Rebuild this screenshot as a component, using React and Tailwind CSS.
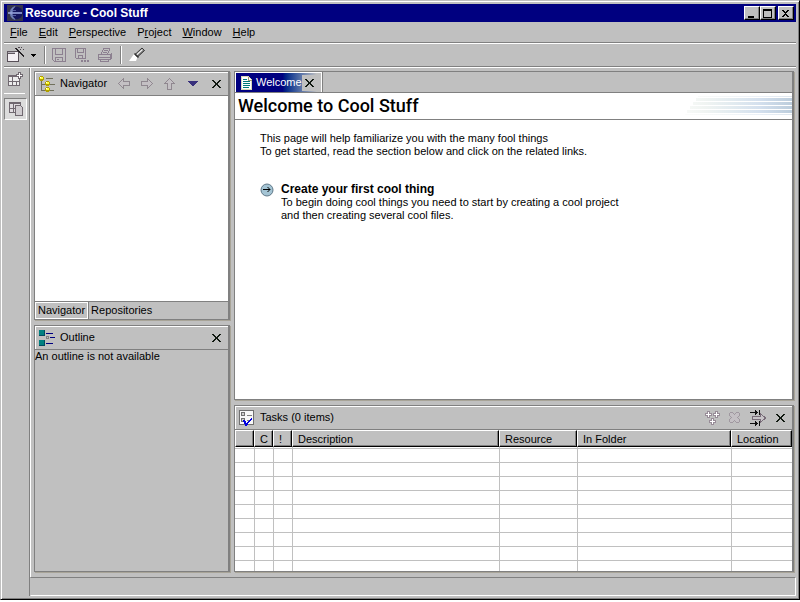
import React from 'react';

const Line = ({ d, c = '#808080', w = 1 }) => <path d={d} stroke={c} strokeWidth={w} fill="none" />;

function Svg({ w = 16, h = 16, children, className = '' }) {
  return (
    <svg width={w} height={h} viewBox={`0 0 ${w} ${h}`} shapeRendering="crispEdges" aria-hidden="true" className={`shrink-0 ${className}`}>
      {children}
    </svg>
  );
}

const EclipseIcon = () => (
  <svg width="16" height="16" viewBox="0 0 16 16" aria-hidden="true" className="shrink-0">
    <rect width="16" height="16" fill="#34344c" />
    <circle cx="9.5" cy="8" r="6.2" fill="#14145c" />
    <path d="M8 1.5A6.800 6.800 0 0 0 8 14.500A8.500 8.500 0 0 1 8 1.500" fill="#8090c4" stroke="#6878b0" strokeWidth="0.8" />
    <path d="M1 8h14" stroke="#98a4dc" strokeWidth="1.6" />
    <path d="M4 5.500h5M4 10.500h5" stroke="#6470b0" strokeWidth="0.8" />
  </svg>
);

const CloseIcon = () => (
  <Svg w={9} h={8}>
    <path d="M0 0h2v1h1v1h1v1h1v-1h1v-1h1v-1h2v1h-1v1h-1v1h-1v2h1v1h1v1h1v1h-2v-1h-1v-1h-1v-1h-1v1h-1v1h-1v1h-2v-1h1v-1h1v-1h1v-2h-1v-1h-1v-1h-1z" fill="#101810" />
  </Svg>
);

const WizardIcon = () => (
  <Svg w={17}>
    <path d="M0.500 4.500h11v10h-11z" fill="#f4f0f4" stroke="#585058" />
    <path d="M0 4h8v3h-8z" fill="#605860" />
    <path d="M1 5h7v1h-7z" fill="#b8b4bc" />
    <Line d="M11 0.500h2M14 0.500h1M17 0.500h1M16 2.500h1M13 2.500h1" c="#504850" />
    <path d="M8 1h2v1h1v1h1v1h1v1h1v1h1v1h1v1h1v2h-1v-1h-1v-1h-1v-1h-1v-1h-1v-1h-1v-1h-1v-1h-1v-1h-1v-1h-1z" fill="#282428" />
  </Svg>
);

const SaveIcon = () => (
  <Svg>
    <path d="M1.5 1.5h13v13h-11l-2-2zM4.5 1.5v6h7v-6M4.5 14.5v-4h7v4M6 12.5h2" stroke="#8c8090" fill="none" />
  </Svg>
);

const SaveAsIcon = () => (
  <Svg>
    <path d="M1.5 1.5h10v10h-9l-1-1zM3.5 1.5v4h6v-4M4.5 11.5v-3h4v3" stroke="#8c8090" fill="none" />
    <path d="M7 13h2v2h-2zM10 13h2v2h-2zM13 13h2v2h-2z" fill="#8c8090" />
  </Svg>
);

const PrintIcon = () => (
  <Svg>
    <path d="M4.5 7.500v-1l2-5h6v1l-2 5M1.5 7.5h12v5h-12zM3.5 12.5v2h8v-2M1.5 10.5h12M13.5 7.5l1-1v5l-1 1M7 3.5h4M6 5.5h4" stroke="#8c8090" fill="none" />
  </Svg>
);

const FlashlightIcon = () => (
  <svg width="16" height="16" viewBox="0 0 16 16" aria-hidden="true" className="shrink-0">
    <path d="M0 14L5 7L8.500 10L7 14z" fill="#fff" />
    <path d="M6 7.500L13 1L15.500 3.500L8.500 10z" fill="#787878" stroke="#202020" strokeWidth="0.8" />
    <path d="M7.500 8L13.500 2.500" stroke="#f0f0f0" strokeWidth="1.2" />
    <path d="M5.500 6.500L9.500 10.500" stroke="#303030" strokeWidth="1.4" />
  </svg>
);

const PerspectiveAddIcon = () => (
  <Svg>
    <path d="M0.500 3.500h11v10h-11z" fill="#ececec" stroke="#706870" />
    <path d="M0 3h9v2h-9z" fill="#706870" />
    <Line d="M4.500 5v9M1 9.500h11M8.500 9v5" c="#706870" />
    <path d="M10.500 0.500h2v2h2v2h-2v2h-2v-2h-2v-2h2z" fill="#fff" stroke="#706870" />
  </Svg>
);

const ResourceIcon = () => (
  <Svg>
    <path d="M1.500 1.500h11v10h-11z" fill="#e0dce0" stroke="#706870" />
    <path d="M1 1h12v2h-12z" fill="#706870" />
    <Line d="M5.500 3v9M2 7.500h8" c="#706870" />
    <path d="M7.500 4.500h5l2 2v8h-7z" fill="#d0ccd0" stroke="#706870" />
  </Svg>
);

const NavigatorIcon = () => (
  <Svg>
    <Line d="M2.500 5v9.500h4M3 8.500h4M7 2.500h7M11 8.500h5M11 14.500h4" c="#70705c" />
    <path d="M1 0h3v1h1v3h-1v1h-3v-1h-1v-3h1zM7 5h3v1h1v3h-1v1h-3v-1h-1v-3h1zM7 11h3v1h1v3h-1v1h-3v-1h-1v-3h1z" fill="#b0a000" />
    <path d="M1 1h3v2h-3zM7 6h3v2h-3zM7 12h3v2h-3z" fill="#ffff38" />
    <path d="M1 1h1v1h-1zM7 6h1v1h-1zM7 12h1v1h-1z" fill="#fff" />
  </Svg>
);

const arrowPaths = {
  left: 'M0.500 5.500l5-5v3h6v4h-6v3z',
  right: 'M11.500 5.500l-5-5v3h-6v4h6v3z',
  up: 'M5.500 0.500l5 5h-3v6h-4v-6h-3z',
};

const ArrowIcon = ({ dir }) => (
  <Svg w={12} h={12}>
    <path d={arrowPaths[dir]} fill="#c4c0c4" stroke="#908890" />
  </Svg>
);

const OutlineIcon = () => (
  <Svg>
    <path d="M0 0h6v6h-6zM0 10h6v6h-6z" fill="#004c60" />
    <path d="M0 0h5v5h-5zM0 10h5v5h-5z" fill="#008080" />
    <Line d="M7 3.500h7M11 7.500h5M7 13.500h7" c="#000080" />
    <path d="M7.500 6.500h2v2h-2z" fill="#c0c0c0" stroke="#808080" />
  </Svg>
);

const PageIcon = () => (
  <Svg w={11} h={14}>
    <path d="M0.500 0.500h7l3 3v10h-10z" fill="#fff" stroke="#d8d8b8" />
    <Line d="M2 3.500h4M2 5.500h7M2 7.500h7M2 9.500h7M2 11.500h6" c="#007878" />
    <path d="M7.500 1v3h3" fill="none" stroke="#a09870" />
  </Svg>
);

const TasksIcon = () => (
  <Svg>
    <path d="M0.500 0.500h14v14h-14z" fill="#f8f8f8" stroke="#707070" />
    <path d="M2.500 2.500h3v3h-3zM2.500 8.500h3v3h-3z" fill="#d0d0d0" stroke="#707070" />
    <Line d="M8 5.500h5M8 10.500h2" />
    <path d="M4 10h2v1h1v2h1v-1h1v-1h1v-1h1v-1h1v-1h1v2h-1v1h-1v1h-1v1h-1v2h-1v1h-2v-2h-1v-2h-1z" fill="#0000e0" />
  </Svg>
);

const NewTaskIcon = () => (
  <Svg>
    <path d="M3 1h3v2h2v3h-2v2h-3v-2h-2v-3h2zM11 1h3v2h2v3h-2v2h-3v-2h-2v-3h2zM7 8h3v2h2v3h-2v2h-3v-2h-2v-3h2z" fill="#988c98" />
    <path d="M4 2h1v2h2v1h-2v2h-1v-2h-2v-1h2zM12 2h1v2h2v1h-2v2h-1v-2h-2v-1h2zM8 9h1v2h2v1h-2v2h-1v-2h-2v-1h2z" fill="#fff" />
  </Svg>
);

const DeleteIcon = () => (
  <Svg w={12} h={12}>
    <path d="M1.500 0.500h2l2 2l2-2h2l1 1v2l-2 2l2 2v2l-1 1h-2l-2-2l-2 2h-2l-1-1v-2l2-2l-2-2v-2z" fill="#c4c0c4" stroke="#a098a0" />
  </Svg>
);

const FilterIcon = () => (
  <Svg w={17}>
    <path d="M2.500 6.500h8v-3l5 4.500l-5 4.500v-3h-8z" fill="#c8c4c8" stroke="#786c78" />
    <Line d="M0 2.500h7M9.500 0v5M0 13.500h7M9.500 11v5" c="#101010" />
    <path d="M5 0h1v1h1v1h1v1h-1v1h-1v1h-1zM5 11h1v1h1v1h1v1h-1v1h-1v1h-1z" fill="#101010" />
  </Svg>
);

const GoIcon = () => (
  <svg width="14" height="14" viewBox="0 0 14 14" aria-hidden="true">
    <circle cx="7" cy="7" r="6" fill="#a4c4d4" stroke="#607888" />
    <path d="M3 6.500h7M7.500 4l2.500 2.500l-2.500 2.500" stroke="#000" fill="none" />
  </svg>
);

const Banner = () => (
  <svg width="108" height="20" viewBox="0 0 108 20" shapeRendering="crispEdges" aria-hidden="true" className="shrink-0">
    <defs>
      <linearGradient id="streak" gradientUnits="userSpaceOnUse" x1="0" y1="0" x2="108" y2="0">
        <stop offset="0" stopColor="#f8faf8" />
        <stop offset="0.200" stopColor="#f0f4f2" />
        <stop offset="0.450" stopColor="#e2ebf0" />
        <stop offset="0.700" stopColor="#d4e0ee" />
        <stop offset="1" stopColor="#bccddc" />
      </linearGradient>
    </defs>
    <path d="M12 2h96v3h-96zM9 6h99v3h-99zM6 10h102v3h-102zM3 14h105v3h-105z" fill="url(#streak)" />
    <path d="M14 0h94v1h-94zM1 18h107v1h-107z" fill="url(#streak)" opacity="0.5" />
  </svg>
);

const menus = [['', 'F', 'ile'], ['', 'E', 'dit'], ['', 'P', 'erspective'], ['P', 'r', 'oject'], ['', 'W', 'indow'], ['', 'H', 'elp']];

const raised = 'border border-t-white border-l-white border-r-black border-b-black shadow-[inset_-1px_-1px_#808080]';

function CaptionButton({ label, children, className = '' }) {
  return (
    <button aria-label={label} className={`flex h-[14px] w-4 items-center justify-center bg-[#c0c0c0] ${raised} ${className}`}>
      <Svg w={10} h={9}>{children}</Svg>
    </button>
  );
}

function IconButton({ label, children, className = '' }) {
  return <button aria-label={label} className={`flex items-center justify-center ${className}`}>{children}</button>;
}

const panel = 'flex min-h-0 flex-col border border-[#808080] border-r-2 shadow-[1px_1px_#a8a498]';

function ViewHeader({ icon, title, children }) {
  return (
    <header className="flex h-6 shrink-0 items-center border-b border-[#808080] pr-[7px] pl-1 shadow-[inset_1px_1px_#fff]">
      {icon}
      <h2 className="flex-1 pl-[5px]">{title}</h2>
      {children}
    </header>
  );
}

const columns = [
  { name: '', label: 'Status', w: 'w-[19px]' },
  { name: 'C', label: 'Completed', w: 'w-[19px]' },
  { name: '!', label: 'Priority', w: 'w-[19px]' },
  { name: 'Description', label: 'Description', w: '' },
  { name: 'Resource', label: 'Resource', w: 'w-[78px]' },
  { name: 'In Folder', label: 'In Folder', w: 'w-[154px]' },
  { name: 'Location', label: 'Location', w: 'w-[61px]' },
];

function TaskTable() {
  return (
    <div className="min-h-0 flex-1 overflow-hidden bg-white">
      <table className="w-full table-fixed border-collapse">
        <thead>
          <tr className="h-[17px]">
            {columns.map((c) => (
              <th key={c.label} aria-label={c.label} className={`p-0 text-left font-normal ${c.w}`}>
                <div className={`h-[17px] bg-[#c0c0c0] pl-[5px] leading-[17px] ${raised}`}>{c.name}</div>
              </th>
            ))}
          </tr>
        </thead>
        <tbody>
          <tr className="h-px">
            {columns.map((c) => <td key={c.label} className="border-r border-b border-[#c0c0c0] p-0 last:border-r-0" />)}
          </tr>
          {Array.from({ length: 9 }, (_, i) => (
            <tr key={i} className="h-[14px]">
              {columns.map((c) => <td key={c.label} className="border-r border-b border-[#c0c0c0] p-0 last:border-r-0" />)}
            </tr>
          ))}
        </tbody>
      </table>
    </div>
  );
}

export default function App() {
  return (
    <div className="h-screen bg-white pb-[2px]">
      <div className="flex h-full flex-col border border-[#c0c0c0] border-r-black border-b-black bg-[#c0c0c0] p-[3px] font-['Liberation_Sans',Arial,sans-serif] text-[11px] leading-[13px] text-black shadow-[inset_1px_1px_#fff,inset_-1px_-1px_#808080]">
        <div className="flex h-[18px] shrink-0 items-center bg-[#000080] pr-[2px] pl-[3px] text-white">
          <EclipseIcon />
          <h1 className="flex-1 pl-[2px] text-[12px] font-bold">Resource - Cool Stuff</h1>
          <CaptionButton label="Minimize"><path d="M1 7h6v2h-6z" /></CaptionButton>
          <CaptionButton label="Maximize"><path d="M0 0h9v9h-9zM1 2v6h7v-6z" fillRule="evenodd" /></CaptionButton>
          <CaptionButton label="Close" className="ml-[2px]">
            <path d="M1 1h2v1h1v1h1v-1h1v-1h2v1h-1v1h-1v1h-1v1h1v1h1v1h1v1h-2v-1h-1v-1h-1v1h-1v1h-2v-1h1v-1h1v-1h1v-1h-1v-1h-1v-1h-1z" />
          </CaptionButton>
        </div>

        <nav className="flex h-[21px] shrink-0 items-center gap-[11px] border-b border-[#808080] pl-[6px]">
          {menus.map(([a, b, c]) => (
            <button key={a + b + c}>{a}<span className="underline">{b}</span>{c}</button>
          ))}
        </nav>

        <div className="flex h-6 shrink-0 items-center border-t border-b border-t-white border-b-[#808080] pl-[3px]">
          <IconButton label="New"><WizardIcon /></IconButton>
          <IconButton label="New options" className="ml-[7px]"><Svg w={5} h={3}><path d="M0 0h5v1h-1v1h-1v1h-1v-1h-1v-1h-1z" /></Svg></IconButton>
          <div className="ml-2 h-[18px] w-[2px] border-r border-l border-r-white border-l-[#808080]" />
          <IconButton label="Save" className="ml-[5px]"><SaveIcon /></IconButton>
          <IconButton label="Save as" className="ml-[7px]"><SaveAsIcon /></IconButton>
          <IconButton label="Print" className="ml-[7px]"><PrintIcon /></IconButton>
          <div className="ml-[7px] h-[18px] w-[2px] border-r border-l border-r-white border-l-[#808080]" />
          <IconButton label="Search" className="ml-[7px]"><FlashlightIcon /></IconButton>
        </div>

        <div className="flex min-h-0 flex-1 border-t border-white">
          <aside className="flex w-[25px] shrink-0 flex-col items-start pt-1">
            <IconButton label="Open perspective" className="ml-1"><PerspectiveAddIcon /></IconButton>
            <div className="mt-[5px] h-px w-[21px] bg-white" />
            <IconButton label="Resource perspective" className="mt-1 h-[22px] w-[23px] border border-t-[#808080] border-r-white border-b-white border-l-[#808080] bg-[#dcdcdc]"><ResourceIcon /></IconButton>
          </aside>

          <div className="flex min-w-0 flex-1 flex-col border-l border-[#808080]">
            <main className="flex min-h-0 flex-1 gap-1 border-l border-white pt-[3px] pr-[2px] pb-[5px] pl-[3px]">
              <div className="flex w-[196px] shrink-0 flex-col gap-[5px]">
                <section className={`${panel} h-[249px] shrink-0`}>
                  <ViewHeader icon={<NavigatorIcon />} title="Navigator">
                    <div className="flex items-center gap-[11px]">
                      <IconButton label="Back"><ArrowIcon dir="left" /></IconButton>
                      <IconButton label="Forward"><ArrowIcon dir="right" /></IconButton>
                      <IconButton label="Up"><ArrowIcon dir="up" /></IconButton>
                      <IconButton label="Menu"><Svg w={11} h={5}><path d="M0 0h11l-5 5h-1z" fill="#38307c" /></Svg></IconButton>
                      <IconButton label="Close navigator" className="ml-[3px]"><CloseIcon /></IconButton>
                    </div>
                  </ViewHeader>
                  <div className="flex-1 bg-white" />
                  <div className="flex h-[18px] shrink-0 border-t border-[#808080]">
                    <button className="border border-white px-[2px] shadow-[1px_0_#808080]">Navigator</button>
                    <button className="px-[3px]">Repositories</button>
                  </div>
                </section>
                <section className={`${panel} flex-1`}>
                  <ViewHeader icon={<OutlineIcon />} title="Outline">
                    <IconButton label="Close outline"><CloseIcon /></IconButton>
                  </ViewHeader>
                  <p>An outline is not available</p>
                </section>
              </div>

              <div className="flex min-w-0 flex-1 flex-col gap-[5px]">
                <section className={`${panel} flex-1 bg-white`}>
                  <div className="flex h-[21px] shrink-0 border-b border-[#808080] bg-[#c0c0c0]">
                    <div className="flex items-center border-t border-r border-l border-white bg-linear-to-r from-[#000080] from-55% to-[#c0c0c0] to-95% pr-[3px] pl-[5px] text-white shadow-[1px_0_#808080]">
                      <PageIcon />
                      <span className="pl-1">Welcome</span>
                      <IconButton label="Close welcome" className="h-4 w-4 bg-[#c0c0c0]"><CloseIcon /></IconButton>
                    </div>
                  </div>
                  <div className="flex h-[27px] shrink-0 items-center justify-between border-b border-[#808080] pl-[3px]">
                    <h2 className="font-[Roboto,Arial,sans-serif] text-[18px] leading-5 font-medium">Welcome to Cool Stuff</h2>
                    <Banner />
                  </div>
                  <div className="px-[25px] pt-3">
                    <p>This page will help familiarize you with the many fool things<br />To get started, read the section below and click on the related links.</p>
                    <div className="mt-[25px] flex gap-[7px]">
                      <button aria-label="Create your first cool thing" className="h-[14px]"><GoIcon /></button>
                      <div>
                        <h3 className="text-[12px] leading-[13px] font-bold">Create your first cool thing</h3>
                        <p>To begin doing cool things you need to start by creating a cool project<br />and then creating several cool files.</p>
                      </div>
                    </div>
                  </div>
                </section>
                <section className={`${panel} h-[167px] shrink-0`}>
                  <ViewHeader icon={<TasksIcon />} title="Tasks (0 items)">
                    <div className="flex items-center gap-[9px]">
                      <IconButton label="New task"><NewTaskIcon /></IconButton>
                      <IconButton label="Delete"><DeleteIcon /></IconButton>
                      <IconButton label="Filter"><FilterIcon /></IconButton>
                      <IconButton label="Close tasks"><CloseIcon /></IconButton>
                    </div>
                  </ViewHeader>
                  <TaskTable />
                </section>
              </div>
            </main>
            <footer className="h-[19px] shrink-0 border border-t-[#808080] border-r-white border-b-white border-l-transparent" />
          </div>
        </div>
      </div>
    </div>
  );
}
